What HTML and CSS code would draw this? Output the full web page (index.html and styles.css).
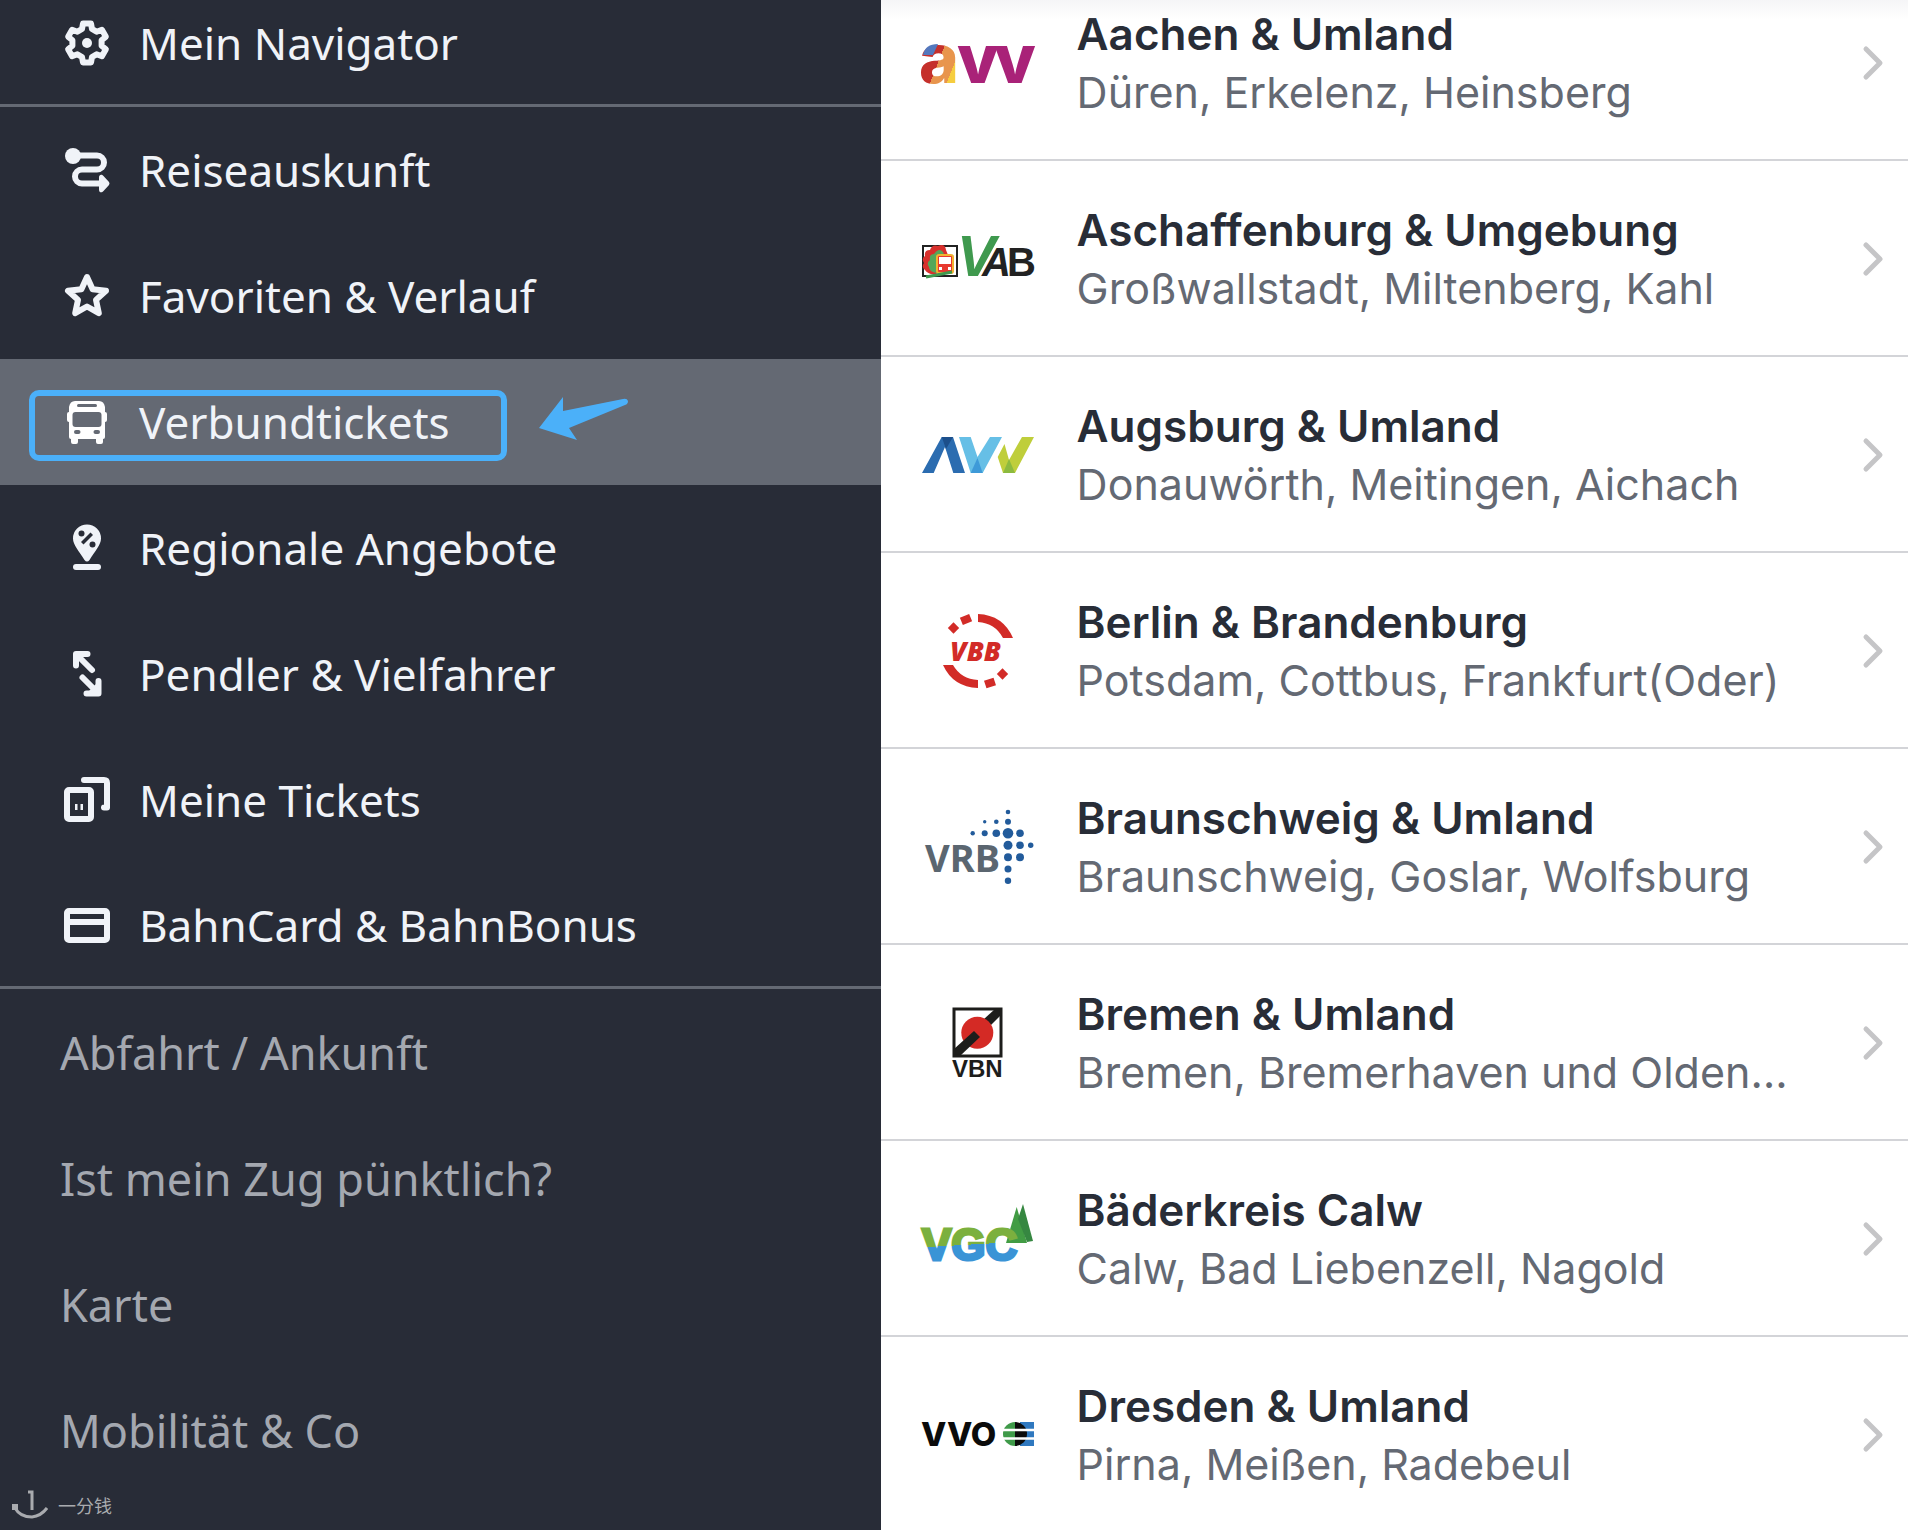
FILE: index.html
```html
<!DOCTYPE html>
<html lang="de">
<head>
    <meta charset="utf-8">
    <title>Verbundtickets</title>
    <link rel="stylesheet" href="styles.css">
</head>
<body>
<div class="app">
    <nav class="sidebar">
        <div class="menu">
            <a class="item divider" href="#">
                <svg class="icon" viewBox="0 0 48 48">
                    <path class="line" d="M19 10L20 4.5H28L29 10L33.6 12.7L38.9 10.8L42.9 17.7L38.6 21.3V26.7L42.9 30.3L38.9 37.2L33.6 35.3L29 38L28 43.5H20L19 38L14.4 35.3L9.1 37.2L5.1 30.3L9.4 26.7V21.3L5.1 17.7L9.1 10.8L14.4 12.7Z"/>
                    <circle cx="24" cy="24" r="5"/>
                </svg>
                <span>Mein Navigator</span>
            </a>
            <a class="item" href="#">
                <svg class="icon" viewBox="0 0 48 48">
                    <circle cx="10" cy="10" r="8"/>
                    <path class="line" d="M12 9.500H34A7 7 0 0 1 34 23.500H19A7 7 0 0 0 19 37.500H39"/>
                    <path d="M36 31.500C36 28 39 28 40.500 30L46 36Q47 37.500 46 39L40.500 45C39 47 36 47 36 43.500Z"/>
                </svg>
                <span>Reiseauskunft</span>
            </a>
            <a class="item" href="#">
                <svg class="icon" viewBox="0 0 48 48">
                    <path class="line" d="M24 5L29.600 17.300L43 18.800L33 27.900L35.800 41.200L24 34.500L12.200 41.200L15 27.900L5 18.800L18.400 17.300Z"/>
                </svg>
                <span>Favoriten &amp; Verlauf</span>
            </a>
            <a class="item active" href="#">
                <svg class="icon" viewBox="0 0 48 48">
                    <path d="M12 3H36Q41 3 42 9V14Q44 14 44 16V22Q44 24 42 24V39Q42 41 40 41V44Q40 46 38 46H35Q33 46 33 44V41H15V44Q15 46 13 46H10Q8 46 8 44V41Q6 41 6 39V24Q4 24 4 22V16Q4 14 6 14V9Q7 3 12 3Z"/>
                    <rect class="hole" x="14" y="6" width="20" height="3" rx="1.500"/>
                    <rect class="hole" x="9.500" y="14" width="29" height="15" rx="3"/>
                    <rect class="hole" x="11" y="32" width="6.500" height="4" rx="2"/>
                    <rect class="hole" x="30.500" y="32" width="6.500" height="4" rx="2"/>
                </svg>
                <span>Verbundtickets</span>
                <div class="marker"></div>
                <svg class="pointer" viewBox="0 0 92 46">
                    <path d="M1 32L25 1L25 15L85 3Q89 2 90 5Q90 8 87 9L31 32L39 44Z"/>
                </svg>
            </a>
            <a class="item" href="#">
                <svg class="icon" viewBox="0 0 48 48">
                    <path d="M24 0.500A14 14 0 0 1 38 14.500C38 21 32 27 26.500 36Q24 39 21.500 36C16 27 10 21 10 14.500A14 14 0 0 1 24 0.500Z"/>
                    <rect x="10" y="40" width="28" height="6" rx="3"/>
                    <g class="dark">
                        <circle cx="18.500" cy="9.500" r="3"/>
                        <circle cx="29.500" cy="20.500" r="3"/>
                        <path d="M27.500 8.500L30 11L20.500 20.500L18 18Z"/>
                    </g>
                </svg>
                <span>Regionale Angebote</span>
            </a>
            <a class="item" href="#">
                <svg class="icon" viewBox="0 0 48 48">
                    <path class="line" d="M24.500 4H13V15.500M14 5L29 20"/>
                    <path d="M12 3H24L12 15Z"/>
                    <path class="line" d="M35.500 31V43.500H23.500M34 42L19.500 27.500"/>
                    <path d="M36 44V31L23 44Z"/>
                </svg>
                <span>Pendler &amp; Vielfahrer</span>
            </a>
            <a class="item" href="#">
                <svg class="icon" viewBox="0 0 48 48">
                    <rect class="line" x="4" y="14" width="24" height="29" rx="2"/>
                    <path class="line" d="M21 4H41Q44 4 44 7V31.500H41"/>
                    <rect x="12" y="28" width="2.500" height="6"/>
                    <rect x="17.500" y="28" width="2.500" height="6"/>
                </svg>
                <span>Meine Tickets</span>
            </a>
            <a class="item divider" href="#">
                <svg class="icon" viewBox="0 0 48 48">
                    <rect class="line" x="4" y="10" width="40" height="29" rx="2"/>
                    <path class="line" d="M4 21H44"/>
                </svg>
                <span>BahnCard &amp; BahnBonus</span>
            </a>
            <a class="item minor" href="#">Abfahrt / Ankunft</a>
            <a class="item minor" href="#">Ist mein Zug pünktlich?</a>
            <a class="item minor" href="#">Karte</a>
            <a class="item minor" href="#">Mobilität &amp; Co</a>
        </div>
        <div class="watermark">
            <svg class="smile" viewBox="0 0 36 30">
                <path d="M16 2H20V20M3 18Q8 27 20 27Q29 26 35 18"/>
                <rect x="0" y="14" width="6" height="6"/>
            </svg>
            <span>一分钱</span>
        </div>
    </nav>

    <main class="content">
        <div class="shade"></div>
        <div class="list">
            <a class="row" href="#">
                <svg class="logo" viewBox="0 0 114 80">
                    <defs>
                        <linearGradient id="avvA" gradientUnits="userSpaceOnUse" x1="0" y1="45" x2="38" y2="60">
                            <stop offset="0.340" stop-color="#c5302b"/>
                            <stop offset="0.340" stop-color="#e8954d"/>
                            <stop offset="0.720" stop-color="#e8954d"/>
                            <stop offset="0.720" stop-color="#f6cd3f"/>
                        </linearGradient>
                    </defs>
                    <g class="avv">
                        <text x="-2" y="60" fill="url(#avvA)">a</text>
                        <text x="36" y="60" fill="#a92278">v</text>
                        <text x="73" y="60" fill="#a92278">v</text>
                    </g>
                    <path d="M2 32Q4 21 17 21L12 32Z" fill="#5478bd"/>
                </svg>
                <div class="info">
                    <div class="name">Aachen &amp; Umland</div>
                    <div class="places">Düren, Erkelenz, Heinsberg</div>
                </div>
                <svg class="chevron" viewBox="0 0 22 38"><path d="M4 5L18 19L4 33"/></svg>
            </a>
            <a class="row" href="#">
                <svg class="logo" viewBox="0 0 114 80">
                    <path d="M2 27H36V57H2Z" fill="#fff" stroke="#222" stroke-width="2"/>
                    <path d="M15 55Q7 56 4 51Q0 48 3 44Q0 39 4 37Q3 31 9 31Q11 25 17 27Q24 24 25 31L27 36L17 54Z" fill="#d8302c"/>
                    <path d="M16 54Q8 53 8 48Q5 44 9 41Q8 35 13 35Q18 28 22 33L24 38V54Z" fill="#54a75a"/>
                    <rect x="16" y="36" width="16" height="18" rx="2" fill="#e8392f" stroke="#f2b331" stroke-width="2"/>
                    <rect x="18" y="38" width="12" height="7" fill="#fff"/>
                    <rect x="18" y="48" width="3" height="3" fill="#fff"/>
                    <rect x="27" y="48" width="3" height="3" fill="#fff"/>
                    <path d="M5 58L31 53" stroke="#3f994e" stroke-width="3"/>
                    <text class="vab-v" x="36" y="57">V</text>
                    <text class="vab" x="61" y="57">A</text>
                    <text class="vab upright" x="86" y="57">B</text>
                </svg>
                <div class="info">
                    <div class="name">Aschaffenburg &amp; Umgebung</div>
                    <div class="places">Großwallstadt, Miltenberg, Kahl</div>
                </div>
                <svg class="chevron" viewBox="0 0 22 38"><path d="M4 5L18 19L4 33"/></svg>
            </a>
            <a class="row" href="#">
                <svg class="logo" viewBox="0 0 114 80">
                    <path d="M1 58L20.700 22H32L44 58H32.300L24 32L12.700 58Z" fill="#2b6cb0"/>
                    <path d="M20.700 22H32L25 34Z" fill="#1c4f8b"/>
                    <path d="M38 22H49.700L56.500 42L69 22H81L61.700 58H49.700Z" fill="#66bfe6"/>
                    <path d="M49.700 58H61.700L56.500 43Z" fill="#3e9ad8"/>
                    <path d="M83.500 29L76.700 42L82 58H94L113 22H101L88 45Z" fill="#bfce3b"/>
                    <path d="M82 58H94L88 44Z" fill="#8cba3f"/>
                </svg>
                <div class="info">
                    <div class="name">Augsburg &amp; Umland</div>
                    <div class="places">Donauwörth, Meitingen, Aichach</div>
                </div>
                <svg class="chevron" viewBox="0 0 22 38"><path d="M4 5L18 19L4 33"/></svg>
            </a>
            <a class="row" href="#">
                <svg class="logo" viewBox="0 0 114 80">
                    <g fill="#d22b27">
                        <path d="M57 3Q82 4 92 27H82Q74 12 57 11Z"/>
                        <path d="M57 77Q32 76 22 54H32Q40 68 57 69Z"/>
                        <rect x="28.500" y="13" width="8" height="8" transform="rotate(-45 32.500 17)"/>
                        <rect x="40" y="4.500" width="10" height="8" transform="rotate(-22 45 8.500)"/>
                        <rect x="64" y="68" width="10" height="8" transform="rotate(-18 69 72)"/>
                        <rect x="77.500" y="59" width="8" height="8" transform="rotate(-45 81.500 63)"/>
                    </g>
                    <text class="vbb" x="29" y="50">VBB</text>
                </svg>
                <div class="info">
                    <div class="name">Berlin &amp; Brandenburg</div>
                    <div class="places">Potsdam, Cottbus, Frankfurt(Oder)</div>
                </div>
                <svg class="chevron" viewBox="0 0 22 38"><path d="M4 5L18 19L4 33"/></svg>
            </a>
            <a class="row" href="#">
                <svg class="logo" viewBox="0 0 114 80">
                    <text class="vrb" x="4" y="65">VRB</text>
                    <g fill="#225b9b">
                        <circle cx="87" cy="5" r="2.300"/>
                        <circle cx="63.700" cy="14.700" r="1.700"/>
                        <circle cx="75.300" cy="14.700" r="2.300"/>
                        <circle cx="87" cy="14.700" r="3"/>
                        <circle cx="51.700" cy="26.300" r="2.200"/>
                        <circle cx="63.700" cy="26.300" r="3"/>
                        <circle cx="75.300" cy="26.300" r="3.800"/>
                        <circle cx="87" cy="26.300" r="5.300"/>
                        <circle cx="99" cy="26.300" r="3.800"/>
                        <circle cx="87" cy="38.300" r="4.500"/>
                        <circle cx="99" cy="38.300" r="3.800"/>
                        <circle cx="109.700" cy="38.300" r="2.700"/>
                        <circle cx="87" cy="50.300" r="4"/>
                        <circle cx="99" cy="50.300" r="4"/>
                        <circle cx="87" cy="62" r="3.500"/>
                        <circle cx="87" cy="73.700" r="3.200"/>
                    </g>
                </svg>
                <div class="info">
                    <div class="name">Braunschweig &amp; Umland</div>
                    <div class="places">Braunschweig, Goslar, Wolfsburg</div>
                </div>
                <svg class="chevron" viewBox="0 0 22 38"><path d="M4 5L18 19L4 33"/></svg>
            </a>
            <a class="row" href="#">
                <svg class="logo" viewBox="0 0 114 80">
                    <rect x="33" y="6" width="47" height="47" fill="#fff"/>
                    <path d="M62 22L69 29L80 18V6H78Z" fill="#fff"/>
                    <path d="M63 16L74 6H80V12L70 22Z" fill="#1d1d1b"/>
                    <circle cx="56.300" cy="29.700" r="16" fill="#d42a25"/>
                    <path d="M33 46L53 28L59 34L39 53H33Z" fill="#1d1d1b"/>
                    <rect x="33" y="6" width="47" height="47" fill="none" stroke="#1d1d1b" stroke-width="3"/>
                    <text class="vbn" x="31" y="74">VBN</text>
                </svg>
                <div class="info">
                    <div class="name">Bremen &amp; Umland</div>
                    <div class="places">Bremen, Bremerhaven und Oldenburg</div>
                </div>
                <svg class="chevron" viewBox="0 0 22 38"><path d="M4 5L18 19L4 33"/></svg>
            </a>
            <a class="row" href="#">
                <svg class="logo" viewBox="0 0 114 80">
                    <defs>
                        <linearGradient id="vgc" gradientUnits="userSpaceOnUse" x1="0" y1="28" x2="2" y2="63">
                            <stop offset="0.580" stop-color="#7bb03e"/>
                            <stop offset="0.580" stop-color="#3a94d6"/>
                        </linearGradient>
                    </defs>
                    <path d="M95.700 8L85 44H106Z" fill="#429c44"/>
                    <path d="M102 5L97 20L106 43L112 42Z" fill="#368741"/>
                    <text class="vgc" x="1" y="61" fill="url(#vgc)" stroke="url(#vgc)">VGC</text>
                </svg>
                <div class="info">
                    <div class="name">Bäderkreis Calw</div>
                    <div class="places">Calw, Bad Liebenzell, Nagold</div>
                </div>
                <svg class="chevron" viewBox="0 0 22 38"><path d="M4 5L18 19L4 33"/></svg>
            </a>
            <a class="row" href="#">
                <svg class="logo" viewBox="0 0 114 80">
                    <text class="vvo" x="0" y="51">VVO</text>
                    <path d="M94 27A12 12 0 0 0 94 51Z" fill="#3f9a49"/>
                    <path d="M99 27H113V51H99Z" fill="#2f78bf"/>
                    <path d="M94 27A12 12 0 0 1 94 51Z" fill="#0b0b0b"/>
                    <path d="M80 35H114M80 43.500H114" stroke="#fff" stroke-width="2.500"/>
                </svg>
                <div class="info">
                    <div class="name">Dresden &amp; Umland</div>
                    <div class="places">Pirna, Meißen, Radebeul</div>
                </div>
                <svg class="chevron" viewBox="0 0 22 38"><path d="M4 5L18 19L4 33"/></svg>
            </a>
        </div>
    </main>
</div>
</body>
</html>
```

FILE: styles.css
```css
body {
    margin: 0;
    font-family: Inter, "Liberation Sans", sans-serif;
}
a {
    color: inherit;
    text-decoration: none;
}
.app {
    display: grid;
    grid-template-columns: 6fr 7fr;
    height: 100vh;
    overflow: hidden;
}

/* left menu */
.sidebar {
    position: relative;
    overflow: hidden;
    background-color: #282c37;
    color: #f0f3f8;
    font-family: "Noto Sans", "Noto Sans CJK SC", sans-serif;
    font-size: 44px;
}
.menu {
    margin-top: -19px;
}
.item {
    position: relative;
    display: flex;
    align-items: center;
    gap: 28px;
    box-sizing: border-box;
    height: 126px;
    padding-left: 63px;
    white-space: nowrap;
}
.divider {
    border-bottom: 3px solid #646973;
}
.active {
    background-color: #646973;
}
.minor {
    padding-left: 60px;
    color: #a4a8b0;
    font-size: 45px;
}
.icon {
    flex: none;
    width: 48px;
    height: 48px;
    fill: #f0f3f8;
}
.active .icon {
    fill: #fff;
}
.icon .line {
    fill: none;
    stroke: #f0f3f8;
    stroke-width: 6;
    stroke-linecap: round;
    stroke-linejoin: round;
}
.icon .hole {
    fill: #646973;
}
.icon .dark {
    fill: #282c37;
}
.marker {
    position: absolute;
    top: 31px;
    left: 29px;
    box-sizing: border-box;
    width: 478px;
    height: 71px;
    border: 6px solid #4bb0f9;
    border-radius: 10px;
}
.pointer {
    position: absolute;
    top: 37px;
    left: 538px;
    width: 92px;
    height: 46px;
    fill: #4bb0f9;
}
.watermark {
    position: absolute;
    left: 12px;
    bottom: 10px;
    display: flex;
    align-items: center;
    gap: 10px;
    color: #a9abaf;
    font-family: "Noto Sans CJK SC", sans-serif;
    font-size: 18px;
    line-height: 30px;
}
.smile {
    width: 36px;
    height: 30px;
    fill: #a9abaf;
}
.smile path {
    fill: none;
    stroke: #a9abaf;
    stroke-width: 3;
}

/* list of regions */
.content {
    position: relative;
    min-width: 0;
    overflow: hidden;
    background-color: #fff;
}
.shade {
    position: absolute;
    top: 0;
    left: 0;
    right: 0;
    height: 20px;
    background: linear-gradient(#f5f5f7, rgba(255, 255, 255, 0));
}
.list {
    margin-top: -35px;
}
.row {
    display: flex;
    align-items: center;
    box-sizing: border-box;
    height: 196px;
    padding: 2px 24px 0 40px;
    border-bottom: 2px solid #d3d4d8;
}
.logo {
    flex: none;
    width: 114px;
    height: 80px;
    margin-right: 42px;
    overflow: visible;
}
.info {
    flex: 1;
    min-width: 0;
    margin-right: 68px;
    font-size: 44px;
    line-height: 58px;
    white-space: nowrap;
}
.name {
    color: #282d37;
    font-weight: 600;
}
.places {
    overflow: hidden;
    color: #646973;
    font-size: 43px;
    text-overflow: ellipsis;
}
.chevron {
    flex: none;
    width: 22px;
    height: 38px;
    fill: none;
    stroke: #c5c5c7;
    stroke-width: 5;
    stroke-linecap: round;
    stroke-linejoin: round;
}

/* lettering inside the logos */
.avv {
    font: 800 68px Inter, sans-serif;
}
.vab-v {
    font: italic bold 58px "Liberation Sans", sans-serif;
    fill: #3f994e;
}
.vab {
    font: italic bold 40px "Liberation Sans", sans-serif;
    fill: #222;
}
.upright {
    font-style: normal;
}
.vbb {
    font: italic 800 27px "Open Sans", sans-serif;
    fill: #d22b27;
}
.vrb {
    font: bold 38px "Noto Sans", sans-serif;
    fill: #5b6670;
}
.vbn {
    font: bold 24px "Liberation Sans", sans-serif;
    fill: #1d1d1b;
}
.vgc {
    font: bold 44px "Liberation Sans", sans-serif;
    stroke-width: 3;
}
.vvo {
    font: 800 33px Inter, sans-serif;
    fill: #0b0b0b;
}
```
